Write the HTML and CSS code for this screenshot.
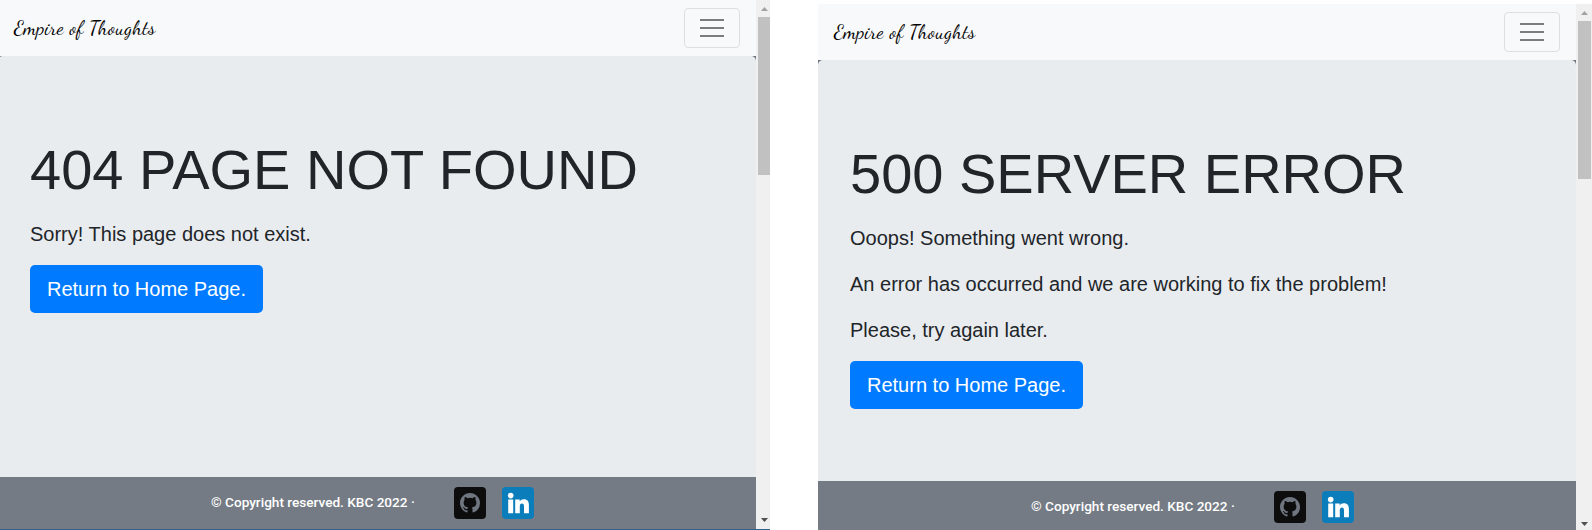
FILE: index.html
```html
<!DOCTYPE html>
<html lang="en">
<head>
<meta charset="utf-8">
<title>Empire of Thoughts</title>
<link rel="stylesheet" href="styles.css">
</head>
<body>
<svg class="symbols" aria-hidden="true">
  <symbol id="github" viewBox="0 0 32 32">
    <rect width="32" height="32" rx="4" fill="#0d0d0e"/>
    <path fill="#6f7680" transform="translate(6 6) scale(1.25)" d="M8 0C3.58 0 0 3.58 0 8c0 3.54 2.29 6.53 5.47 7.59.4.07.55-.17.55-.38 0-.19-.01-.82-.01-1.49-2.01.37-2.53-.49-2.69-.94-.09-.23-.48-.94-.82-1.13-.28-.15-.68-.52-.01-.53.63-.01 1.08.58 1.23.82.72 1.21 1.87.87 2.33.66.07-.52.28-.87.51-1.07-1.78-.2-3.64-.89-3.64-3.95 0-.87.31-1.59.82-2.15-.08-.2-.36-1.02.08-2.12 0 0 .67-.21 2.2.82a7.6 7.6 0 0 1 4 0c1.53-1.04 2.2-.82 2.2-.82.44 1.1.16 1.92.08 2.12.51.56.82 1.27.82 2.15 0 3.07-1.87 3.75-3.65 3.95.29.25.54.73.54 1.48 0 1.07-.01 1.93-.01 2.2 0 .21.15.46.55.38A8 8 0 0 0 16 8c0-4.42-3.58-8-8-8z"/>
  </symbol>
  <symbol id="linkedin" viewBox="0 0 32 32">
    <rect width="32" height="32" rx="4" fill="#0c7dbb"/>
    <circle cx="8.7" cy="8.6" r="2.8" fill="#fff"/>
    <path fill="#fff" d="M6.2 12.6h5V26.2h-5zM13.2 12.6h4.5v1.9c.8-1.4 2.2-2.2 4.2-2.2 3.7 0 5 2.3 5 5.9v8H22v-6.8c0-1.7-.5-2.8-2-2.8-1.6 0-2.2 1.2-2.2 2.9v6.7h-4.6z"/>
  </symbol>
</svg>
<div class="screens">
  <section class="window window-left">
    <div class="page">
      <nav class="navbar">
        <a class="brand">Empire of Thoughts</a>
        <button class="toggler" aria-label="Toggle navigation"><span></span><span></span><span></span></button>
      </nav>
      <div class="backdrop">
        <main class="jumbotron">
          <h1>404 PAGE NOT FOUND</h1>
          <p>Sorry! This page does not exist.</p>
          <a class="btn">Return to Home Page.</a>
        </main>
      </div>
      <footer class="footer">
        <span class="copyright">© Copyright reserved. KBC 2022 ·</span>
        <svg class="social"><use href="#github"/></svg>
        <svg class="social"><use href="#linkedin"/></svg>
      </footer>
    </div>
    <div class="scrollbar"><i class="arrow-up"></i><i class="thumb"></i><i class="arrow-down"></i></div>
  </section>
  <section class="window window-right">
    <div class="page">
      <nav class="navbar">
        <a class="brand">Empire of Thoughts</a>
        <button class="toggler" aria-label="Toggle navigation"><span></span><span></span><span></span></button>
      </nav>
      <div class="backdrop">
        <main class="jumbotron">
          <h1>500 SERVER ERROR</h1>
          <p>Ooops! Something went wrong.</p>
          <p>An error has occurred and we are working to fix the problem!</p>
          <p>Please, try again later.</p>
          <a class="btn">Return to Home Page.</a>
        </main>
      </div>
      <footer class="footer">
        <span class="copyright">© Copyright reserved. KBC 2022 ·</span>
        <svg class="social"><use href="#github"/></svg>
        <svg class="social"><use href="#linkedin"/></svg>
      </footer>
    </div>
    <div class="scrollbar"><i class="arrow-up"></i><i class="thumb"></i><i class="arrow-down"></i></div>
  </section>
</div>
</body>
</html>
```
FILE: styles.css
```css
* { box-sizing: border-box; }

body {
  margin: 0;
  overflow: hidden;
  background: #fff;
  color: #212529;
  font-family: "Liberation Sans", Arial, sans-serif;
}

.symbols { display: none; }

.screens {
  display: flex;
  justify-content: space-between;
  height: 530px;
}

.window { display: flex; overflow: hidden; }

.window-left {
  width: 770px;
  height: 530px;
  border-bottom: 1px solid #32618b;
}

.window-right {
  width: 774px;
  height: 526px;
  margin-top: 4px;
}

.page {
  flex: none;
  display: flex;
  flex-direction: column;
  width: 758px;
}

.window-left .page { margin-left: -2px; }

.navbar {
  display: flex;
  flex: none;
  align-items: center;
  justify-content: space-between;
  height: 56px;
  padding: 0 16px;
  background: #f8f9fa;
}

.brand {
  font-family: "Dancing Script", "Liberation Serif", cursive;
  font-size: 20px;
  line-height: 30px;
  letter-spacing: 0.28px;
  color: #000;
}

.toggler {
  display: flex;
  flex-direction: column;
  align-items: center;
  justify-content: center;
  gap: 6px;
  width: 56px;
  height: 40px;
  padding: 0;
  border: 1px solid #dedfe0;
  border-radius: 4px;
  background: transparent;
}

.toggler span { width: 24px; height: 2px; background: #7c7c7d; }

.backdrop { flex: none; height: 421px; background: #6c757d; }

.jumbotron {
  height: 421px;
  padding: 80px 32px 0;
  border-radius: 5px 5px 0 0;
  background: #e9ecef;
}

h1 {
  margin: 0 0 16px;
  font-size: 56px;
  font-weight: 400;
  line-height: 67px;
  white-space: nowrap;
}

p { margin: 0 0 16px; font-size: 20px; line-height: 30px; }

.btn {
  display: inline-block;
  height: 48px;
  padding: 9px 17px;
  border-radius: 5px;
  background: #007bff;
  color: #fff;
  font-size: 20px;
  line-height: 30px;
}

.footer {
  flex: none;
  display: flex;
  align-items: flex-start;
  height: 53px;
  padding: 10px 0 0 213px;
  background: #747b84;
}

.copyright {
  width: 243px;
  color: #fff;
  font-family: Roboto, sans-serif;
  font-size: 13.6px;
  font-weight: 500;
  line-height: 31px;
  white-space: nowrap;
}

.social { width: 32px; height: 32px; margin-right: 16px; }

.scrollbar {
  position: relative;
  flex: 1;
  background: #f0f0f0;
}

.scrollbar i { position: absolute; }

.arrow-up, .arrow-down { left: 5px; width: 7px; height: 4px; }

.arrow-up {
  top: 7px;
  background: #a3a3a3;
  clip-path: polygon(50% 0, 100% 100%, 0 100%);
}

.arrow-down {
  top: 518px;
  background: #505050;
  clip-path: polygon(0 0, 100% 0, 50% 100%);
}

.thumb { top: 17px; left: 2px; width: 13px; height: 158px; background: #c1c1c1; }
```
